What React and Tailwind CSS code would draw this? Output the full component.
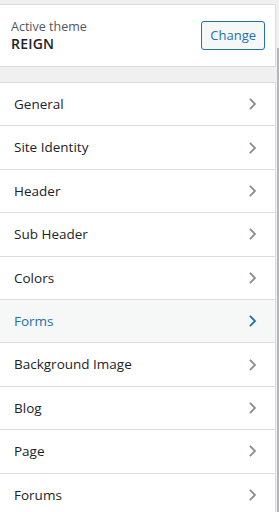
const sections = [
  "General",
  "Site Identity",
  "Header",
  "Sub Header",
  "Colors",
  "Forms",
  "Background Image",
  "Blog",
  "Page",
  "Forums",
];

function Chevron({ active }) {
  return (
    <svg width="10" height="12" viewBox="0 0 10 12" fill="none">
      <path
        d="M2.5 1.5 L7 6 L2.5 10.5"
        stroke={active ? "#2271b1" : "#8c8f94"}
        strokeWidth="1.8"
        strokeLinecap="square"
      />
    </svg>
  );
}

export default function App() {
  const current = "Forms";

  return (
    <div
      className="flex w-[279px] h-[512px] overflow-hidden bg-[#f0f0f1]"
      style={{ fontFamily: '"Open Sans", "Noto Sans", sans-serif' }}
    >
      <div className="w-[276px] shrink-0 flex flex-col">
        <div className="h-[5px] shrink-0 border-b border-[#dcdcde]" />

        {/* active theme card */}
        <div className="h-[62px] shrink-0 bg-white border-b border-r border-[#dcdcde] flex items-center justify-between pl-[11px] pr-[10px]">
          <div className="flex flex-col">
            <span className="text-[12.5px] leading-[16px] text-[#50575e]">Active theme</span>
            <span className="text-[14px] leading-[17px] font-semibold text-[#1d2327] tracking-[0.2px]">REIGN</span>
          </div>
          <button className="h-[29px] px-[8px] rounded-[3px] border border-[#2271b1] bg-[#f6f7f7] text-[#2271b1] text-[13px] leading-none">
            Change
          </button>
        </div>

        <div className="h-[16px] shrink-0 border-b border-[#dcdcde]" />

        {/* section list */}
        <ul className="flex flex-col border-r border-[#dcdcde]">
          {sections.map((name) => {
            const active = name === current;
            return (
              <li
                key={name}
                className={`h-[43.4px] shrink-0 flex items-center justify-between pl-[14px] pr-[17px] border-b border-[#dcdcde] text-[13.5px] ${
                  active ? "bg-[#f6f7f7] text-[#2271b1]" : "bg-white text-[#1d2327]"
                }`}
              >
                <span>{name}</span>
                <Chevron active={active} />
              </li>
            );
          })}
        </ul>
      </div>

      {/* scrollbar */}
      <div className="flex-1 flex justify-end">
        <div className="mt-[48px] w-[2px] h-[464px] bg-[#b4b6b9]" />
      </div>
    </div>
  );
}
